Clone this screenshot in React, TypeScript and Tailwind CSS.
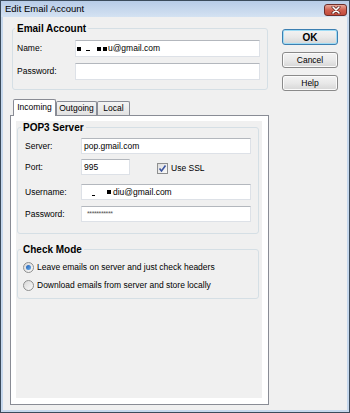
import React from "react";

const Sq = ({ cls = "" }: { cls?: string }) => (
  <span className={"inline-block w-[4px] h-[4px] bg-black " + cls} />
);

const Field = ({ w, children }: { w: string; children?: React.ReactNode }) => (
  <div
    className={
      "h-[16px] border border-[#dde1e7] border-t-[#b3b7bd] bg-white flex items-center pl-[1px] overflow-hidden whitespace-nowrap " +
      w
    }
  >
    {children}
  </div>
);

const Btn = ({ children, def = false }: { children: React.ReactNode; def?: boolean }) => (
  <div
    className={
      "w-[56px] h-[16px] rounded-[3px] border flex items-center justify-center bg-linear-to-b from-[#f3f3f3] via-[#e9e9e9] to-[#d6d6d6] " +
      (def
        ? "border-[#3c7fb1] shadow-[inset_0_0_0_1px_#9fdcf5]"
        : "border-[#8a8a8a] shadow-[inset_0_0_0_1px_#fbfbfb]")
    }
  >
    {children}
  </div>
);

const Radio = ({ on }: { on?: boolean }) => (
  <span className="w-[11px] h-[11px] rounded-full border border-[#8e8f8f] bg-linear-to-br from-[#d8d8d8] to-[#fafafa] flex items-center justify-center">
    {on && (
      <span className="w-[5px] h-[5px] rounded-full bg-linear-to-br from-[#1b5cb5] to-[#6eb1ec]" />
    )}
  </span>
);

export default function App() {
  return (
    <div className="w-[350px] h-[413px] border border-[#3b4b5b] bg-[#c6d8ed] flex flex-col overflow-hidden font-['Liberation_Sans',Arial,sans-serif] text-[8.5px] leading-[11px] text-black">
      {/* title bar */}
      <div className="h-[16px] shrink-0 flex items-start bg-linear-to-b from-[#b7cce7] to-[#d4e2f2]">
        <span className="ml-[4px] mt-[2px] text-[9.5px] leading-[12px]">Edit Email Account</span>
        <div className="ml-auto mr-[2px] mt-[3px] w-[23px] h-[12px] rounded-[3px] border border-[#6d2e2a] bg-linear-to-b from-[#e8a99c] via-[#d0604f] to-[#c24a3b] flex items-center justify-center">
          <svg width="10" height="8" viewBox="0 0 10 8">
            <path d="M2 1 L8 7 M8 1 L2 7" stroke="#5a2420" strokeWidth="3" strokeLinecap="round" />
            <path d="M2 1 L8 7 M8 1 L2 7" stroke="#ffffff" strokeWidth="1.6" strokeLinecap="round" />
          </svg>
        </div>
      </div>

      {/* client */}
      <div className="mx-[2px] h-[393px] shrink-0 bg-[#f0f0f0] flex flex-col">
        <div className="flex items-start pt-[5px]">
          <fieldset className="ml-[9px] w-[256px] border border-[#d5dfe5] rounded-[3px] pl-[4px] pb-[9px]">
            <legend className="ml-[-2px] px-[2px] text-[10px] font-bold leading-[13px]">Email Account</legend>
            <div className="pt-[5px] flex flex-col gap-[6px]">
              <div className="flex items-center h-[17px]">
                <span className="w-[58px]">Name:</span>
                <div className="w-[185px] h-[17px] border border-[#dde1e7] border-t-[#b3b7bd] bg-white flex items-center whitespace-nowrap">
                  <Sq cls="ml-[1px]" />
                  <span className="ml-[5px] w-[4px] h-[1px] bg-black self-end mb-[5px]" />
                  <Sq cls="ml-[7px]" />
                  <Sq cls="ml-[2px]" />
                  <span className="ml-[1px]">u@gmail.com</span>
                </div>
              </div>
              <div className="flex items-center h-[17px]">
                <span className="w-[58px]">Password:</span>
                <div className="w-[185px] h-[17px] border border-[#dde1e7] border-t-[#b3b7bd] bg-white" />
              </div>
            </div>
          </fieldset>
          <div className="ml-[14px] mt-[7px] flex flex-col gap-[7px]">
            <Btn def>
              <span className="font-bold text-[10px]">OK</span>
            </Btn>
            <Btn>Cancel</Btn>
            <Btn>Help</Btn>
          </div>
        </div>

        {/* tabs */}
        <div className="mt-[8px] ml-[10px] h-[16px] flex items-end">
          <div className="relative z-10 w-[43px] h-[17px] mb-[-1px] border border-b-0 border-[#898c95] rounded-t-[2px] bg-white flex items-center justify-center pb-[1px]">
            Incoming
          </div>
          <div className="w-[41px] h-[14px] border border-b-0 border-[#898c95] rounded-t-[2px] bg-linear-to-b from-[#f4f4f4] to-[#e2e2e2] flex items-center justify-center">
            Outgoing
          </div>
          <div className="w-[33px] h-[14px] border border-b-0 border-[#898c95] rounded-t-[2px] bg-linear-to-b from-[#f4f4f4] to-[#e2e2e2] flex items-center justify-center">
            Local
          </div>
        </div>
        <div className="ml-[7px] w-[259px] h-[290px] border border-[#898c95] bg-white pl-[5px] pt-[5px] pr-[6px] pb-[6px]">
          <div className="h-full bg-[#f0f0f0] pl-[1px]">
            <fieldset className="w-[242px] border border-[#d5dfe5] rounded-[3px] pl-[7px] pb-[11px]">
              <legend className="ml-[-4px] px-[2px] text-[10px] font-bold leading-[13px]">POP3 Server</legend>
              <div className="pt-[4px] flex flex-col">
                <div className="flex items-center h-[16px]">
                  <span className="w-[56px]">Server:</span>
                  <Field w="w-[170px]">
                    <span className="ml-[1px]">pop.gmail.com</span>
                  </Field>
                </div>
                <div className="flex items-center h-[16px] mt-[5px]">
                  <span className="w-[56px]">Port:</span>
                  <Field w="w-[49px]">
                    <span className="ml-[1px]">995</span>
                  </Field>
                  <span className="ml-[27px] mt-[2px] w-[11px] h-[11px] border border-[#8e8f8f] bg-linear-to-br from-[#dedede] to-[#fbfbfb] flex items-center justify-center">
                    <svg width="9" height="9" viewBox="0 0 9 9">
                      <path d="M1.5 4.5 L3.5 7 L7.5 1.5" fill="none" stroke="#3c55a0" strokeWidth="1.6" />
                    </svg>
                  </span>
                  <span className="ml-[3px] mt-[2px]">Use SSL</span>
                </div>
                <div className="flex items-center h-[16px] mt-[9px]">
                  <span className="w-[56px]">Username:</span>
                  <Field w="w-[170px]">
                    <span className="ml-[9px] w-[3px] h-[1px] bg-black self-end mb-[3px]" />
                    <Sq cls="ml-[12px]" />
                    <span className="ml-[2px]">diu@gmail.com</span>
                  </Field>
                </div>
                <div className="flex items-center h-[16px] mt-[6px]">
                  <span className="w-[56px]">Password:</span>
                  <Field w="w-[170px]">
                    <span className="ml-[4px] text-[7px] leading-[7px] tracking-[-0.4px] text-[#555] self-start mt-[3px]">
                      ***********
                    </span>
                  </Field>
                </div>
              </div>
            </fieldset>
            <fieldset className="mt-[9px] w-[242px] border border-[#d5dfe5] rounded-[3px] pl-[5px] pb-[6px]">
              <legend className="ml-[-2px] px-[2px] text-[10px] font-bold leading-[13px]">Check Mode</legend>
              <div className="pt-[4px] flex flex-col gap-[4px]">
                <div className="flex items-center h-[14px]">
                  <Radio on />
                  <span className="ml-[3px]">Leave emails on server and just check headers</span>
                </div>
                <div className="flex items-center h-[14px]">
                  <Radio />
                  <span className="ml-[3px]">Download emails from server and store locally</span>
                </div>
              </div>
            </fieldset>
          </div>
        </div>
      </div>
    </div>
  );
}
